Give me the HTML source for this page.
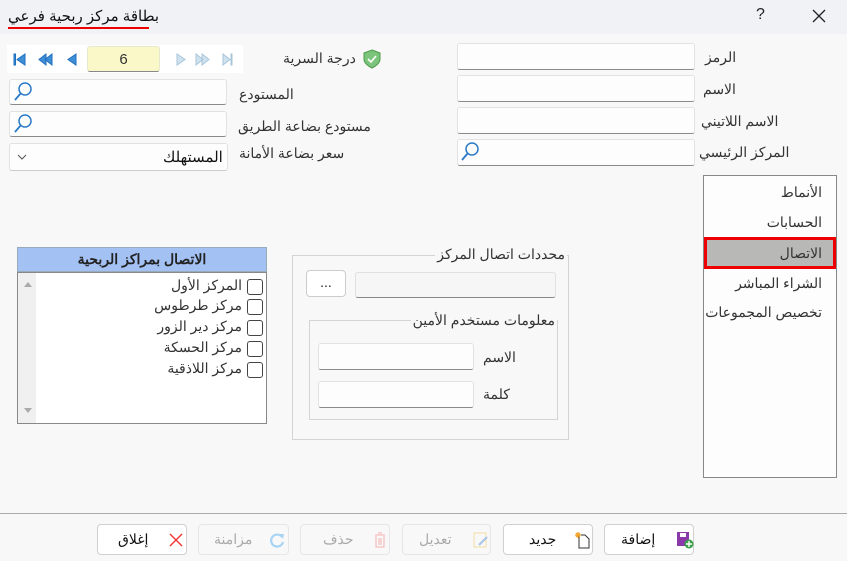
<!DOCTYPE html>
<html><head><meta charset="utf-8"><style>
body{margin:0;width:847px;height:561px;background:#f8f8f8;font-family:"Liberation Sans","Noto Sans CJK SC",sans-serif;font-size:14px;color:#222;position:relative;overflow:hidden}
.a{position:absolute}
.in{position:absolute;background:#fdfdfd;border:1px solid #e2e2e2;border-bottom:1px solid #8a8a8a;border-radius:3px;box-sizing:border-box}
.lb{position:absolute;direction:rtl;white-space:nowrap;font-size:14px;color:#333}
.btn{position:absolute;top:524px;height:31px;background:#fff;border:1px solid #d0d0d0;border-radius:4px;box-sizing:border-box}
.btn span{position:absolute;top:6px;font-size:14px;direction:rtl}
.dis{background:#f8f8f8;border-color:#e6e6e6}
.dis span{color:#aaa}
.cb{position:absolute;left:247px;width:14px;height:14px;border:1px solid #444;border-radius:3px;background:#fff}
</style></head><body>
<div class="a" style="left:0;top:0;width:847px;height:34px;background:#f0f2f5"></div>
<div class="lb" style="left:8px;top:7px;font-size:15px;color:#111">بطاقة مركز ربحية فرعي</div>
<div class="a" style="left:8px;top:27px;width:141px;height:2px;background:#e00"></div>
<div class="a" style="left:756px;top:6px;font-size:16px">?</div>
<svg class="a" style="left:812px;top:9px" width="14" height="14"><path d="M1 1L13 13M13 1L1 13" stroke="#222" stroke-width="1.3"/></svg>

<div class="a" style="left:7px;top:45px;width:236px;height:28px;background:#fff"></div>
<svg class="a" style="left:12px;top:52px" width="225" height="16">
<g fill="#3f8fd6" stroke="#1f6fbf"><rect x="2" y="2" width="1.5" height="11"/><path d="M13 2L5 7.5L13 13Z"/><path d="M34 2L27 7.5L34 13Z M40 2L33 7.5L40 13Z"/><path d="M64 2L56 7.5L64 13Z"/></g>
<g fill="#cfe2f0" stroke="#a8c4d8"><path d="M165 2L173 7.5L165 13Z"/><path d="M184 2L191 7.5L184 13Z M190 2L197 7.5L190 13Z"/><path d="M211 2L218 7.5L211 13Z"/><rect x="219" y="2" width="1" height="11"/></g>
</svg>
<div class="in" style="left:87px;top:46px;width:73px;height:26px;background:#faf8c8;border-color:#e8e8d0;border-bottom-color:#888;text-align:center;line-height:25px;font-size:15px;color:#333">6</div>
<div class="lb" style="left:283px;top:50px">درجة السرية</div>
<svg class="a" style="left:362px;top:49px" width="20" height="20"><path d="M10 1L18 4V10C18 14 14 17 10 19C6 17 2 14 2 10V4Z" fill="#7cc47c" stroke="#4a9a4a"/><path d="M6 10L9 13L14 7" stroke="#fff" stroke-width="1.6" fill="none"/></svg>

<div class="in" style="left:9px;top:79px;width:218px;height:26px"></div>
<div class="in" style="left:9px;top:111px;width:218px;height:26px"></div>
<div class="in" style="left:9px;top:143px;width:219px;height:28px;border-bottom-color:#ccc"></div>
<svg class="a" style="left:12px;top:81px" width="22" height="22"><circle cx="13" cy="8" r="6" fill="none" stroke="#2a7ac8" stroke-width="1.5"/><path d="M9 12L3 19" stroke="#2a7ac8" stroke-width="1.8"/></svg>
<svg class="a" style="left:12px;top:113px" width="22" height="22"><circle cx="13" cy="8" r="6" fill="none" stroke="#2a7ac8" stroke-width="1.5"/><path d="M9 12L3 19" stroke="#2a7ac8" stroke-width="1.8"/></svg>
<svg class="a" style="left:17px;top:153px" width="10" height="8"><path d="M1 2L5 6L9 2" stroke="#555" fill="none"/></svg>
<div class="lb" style="left:163px;top:148px;color:#111;font-size:15px">المستهلك</div>
<div class="lb" style="left:239px;top:86px">المستودع</div>
<div class="lb" style="left:238px;top:118px">مستودع بضاعة الطريق</div>
<div class="lb" style="left:239px;top:145px">سعر بضاعة الأمانة</div>

<div class="in" style="left:457px;top:43px;width:238px;height:27px"></div>
<div class="in" style="left:457px;top:75px;width:238px;height:27px"></div>
<div class="in" style="left:457px;top:107px;width:238px;height:27px"></div>
<div class="in" style="left:457px;top:139px;width:238px;height:27px"></div>
<svg class="a" style="left:459px;top:141px" width="22" height="22"><circle cx="13" cy="8" r="6" fill="none" stroke="#2a7ac8" stroke-width="1.5"/><path d="M9 12L3 19" stroke="#2a7ac8" stroke-width="1.8"/></svg>
<div class="lb" style="left:705px;top:49px">الرمز</div>
<div class="lb" style="left:703px;top:81px">الاسم</div>
<div class="lb" style="left:701px;top:113px">الاسم اللاتيني</div>
<div class="lb" style="left:699px;top:144px">المركز الرئيسي</div>

<div class="a" style="left:703px;top:175px;width:134px;height:303px;background:#fdfdfd;border:1px solid #888;box-sizing:border-box;overflow:hidden">
<div class="lb" style="right:14px;top:8px">الأنماط</div>
<div class="lb" style="right:14px;top:38px">الحسابات</div>
<div class="a" style="left:0;top:61px;width:132px;height:32px;background:#b8b8b6;border:3px solid #e00;box-sizing:border-box"></div>
<div class="lb" style="right:14px;top:69px">الاتصال</div>
<div class="lb" style="right:14px;top:99px">الشراء المباشر</div>
<div class="lb" style="right:14px;top:128px">تخصيص المجموعات</div>
</div>

<div class="a" style="left:17px;top:247px;width:250px;height:25px;background:#a3c1f3;border:1px solid #9ab;box-sizing:border-box;text-align:center;font-weight:bold;line-height:22px;direction:rtl">الاتصال بمراكز الربحية</div>
<div class="a" style="left:17px;top:272px;width:250px;height:152px;background:#fff;border:1px solid #888;box-sizing:border-box"></div>
<div class="a" style="left:18px;top:273px;width:18px;height:150px;background:#f0f0f0"></div>
<svg class="a" style="left:23px;top:281px" width="10" height="140"><path d="M1 6L5 1L9 6Z" fill="#aaa"/><path d="M1 127L5 132L9 127Z" fill="#aaa"/></svg>
<div class="cb" style="top:279px"></div><div class="lb" style="right:605px;top:277px">المركز الأول</div>
<div class="cb" style="top:299px"></div><div class="lb" style="right:605px;top:297px">مركز طرطوس</div>
<div class="cb" style="top:320px"></div><div class="lb" style="right:605px;top:318px">مركز دير الزور</div>
<div class="cb" style="top:341px"></div><div class="lb" style="right:605px;top:339px">مركز الحسكة</div>
<div class="cb" style="top:362px"></div><div class="lb" style="right:605px;top:360px">مركز اللاذقية</div>

<div class="a" style="left:292px;top:255px;width:277px;height:185px;border:1px solid #d4d4d4;box-sizing:border-box"></div>
<div class="lb" style="right:280px;top:246px;background:#f8f8f8;padding:0 2px">محددات اتصال المركز</div>
<div class="a" style="left:306px;top:270px;width:40px;height:27px;border:1px solid #ccc;border-radius:4px;background:#fff;box-sizing:border-box;text-align:center;line-height:22px">...</div>
<div class="in" style="left:355px;top:272px;width:201px;height:26px;background:#f6f6f6;border-color:#e0e0e0;border-bottom-color:#888"></div>
<div class="a" style="left:309px;top:320px;width:249px;height:100px;border:1px solid #d4d4d4;box-sizing:border-box"></div>
<div class="lb" style="right:290px;top:312px;background:#f8f8f8;padding:0 2px">معلومات مستخدم الأمين</div>
<div class="in" style="left:318px;top:343px;width:156px;height:27px"></div>
<div class="in" style="left:318px;top:381px;width:156px;height:27px"></div>
<div class="lb" style="left:483px;top:349px">الاسم</div>
<div class="lb" style="left:483px;top:386px">كلمة</div>

<div class="a" style="left:0;top:513px;width:847px;height:1px;background:#aaa"></div>
<div class="btn" style="left:97px;width:90px"><span style="left:20px;color:#111">إغلاق</span><svg class="a" style="left:71px;top:8px" width="14" height="14"><path d="M1 1L13 13M13 1L1 13" stroke="#e33" stroke-width="1.4"/></svg></div>
<div class="btn dis" style="left:198px;width:91px"><span style="left:15px">مزامنة</span><svg class="a" style="left:70px;top:7px" width="16" height="16"><path d="M13 5A6 6 0 1 0 14 10" stroke="#a8d4f4" stroke-width="2.2" fill="none"/><path d="M10 2L15 2L14 7Z" fill="#a8d4f4"/></svg></div>
<div class="btn dis" style="left:300px;width:90px"><span style="left:22px">حذف</span><svg class="a" style="left:72px;top:7px" width="14" height="16"><path d="M2 3H12M5 1H9M3 4V15H11V4M6 6V13M8 6V13" stroke="#f4b0b0" fill="none"/></svg></div>
<div class="btn dis" style="left:402px;width:89px"><span style="left:16px">تعديل</span><svg class="a" style="left:70px;top:7px" width="16" height="16"><rect x="1" y="1" width="12" height="14" fill="none" stroke="#f4dca0"/><path d="M6 13L14 5" stroke="#a8c4e4" stroke-width="2"/></svg></div>
<div class="btn" style="left:503px;width:90px"><span style="left:25px;color:#111">جديد</span><svg class="a" style="left:70px;top:6px" width="18" height="18"><path d="M5 4H11L15 8V17H5Z" fill="#fff" stroke="#333"/><path d="M4 1V7M1 4H7M2 2L6 6M6 2L2 6" stroke="#f0a020" stroke-width="1.2"/></svg></div>
<div class="btn" style="left:604px;width:90px"><span style="left:16px;color:#111">إضافة</span><svg class="a" style="left:71px;top:6px" width="18" height="18"><rect x="1" y="1" width="12" height="14" fill="#8a3aa8"/><rect x="4" y="2" width="6" height="4" fill="#fff"/><circle cx="13" cy="13" r="4.5" fill="#3aa04a"/><path d="M13 10V16M10 13H16" stroke="#fff" stroke-width="1.4"/></svg></div>
</body></html>
